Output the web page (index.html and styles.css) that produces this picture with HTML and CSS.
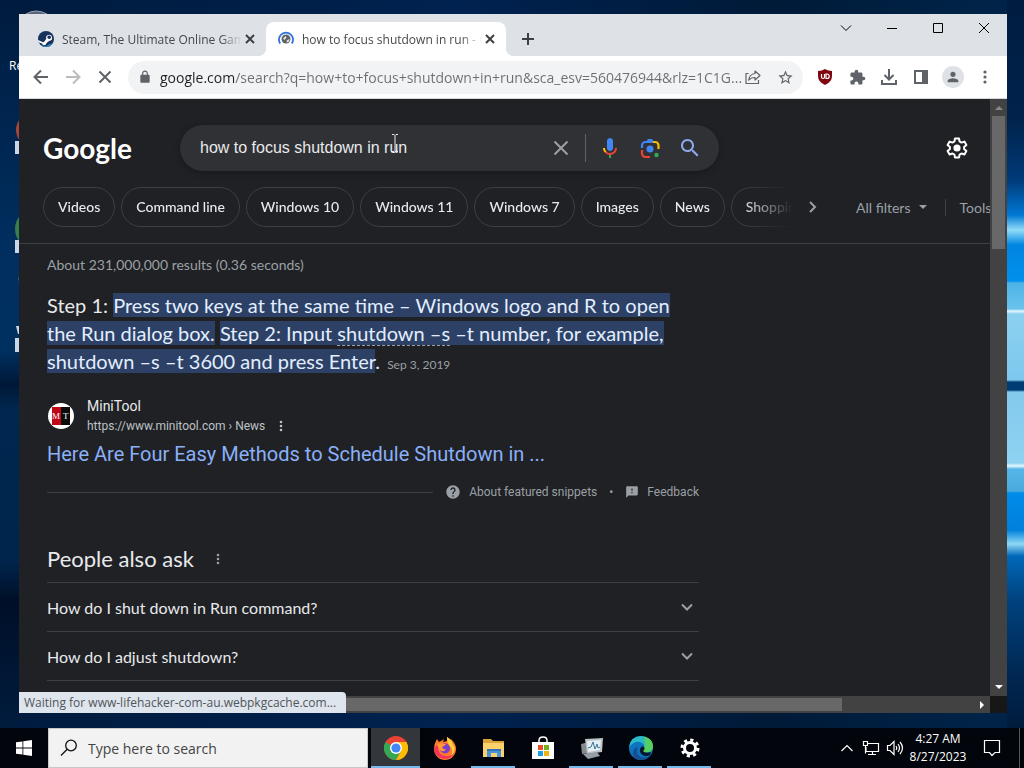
FILE: index.html
```html
<!DOCTYPE html>
<html lang="en">
<head>
    <meta charset="UTF-8">
    <meta name="viewport" content="width=device-width, initial-scale=1.0">
    <title>how to focus shutdown in run</title>
    <link rel="stylesheet" href="styles.css">
</head>
<body>
    <main class="desktop">
        <!-- desktop shortcuts, mostly hidden behind the window -->
        <svg class="shortcuts" width="48" height="400" viewBox="0 0 48 400" aria-hidden="true">
            <path d="M26 14q10-6 21 0" fill="#56657a" stroke="#9aa7b8" stroke-width="1"/>
            <circle cx="33" cy="130" r="17" fill="#a8453f"/>
            <circle cx="35" cy="229" r="20" fill="#35804f"/>
            <path d="M15 141h5v13h-5zM15 240h5v13h-5zM15 338h5v14h-5zM16 326h4v8h-2z" fill="#c9d6ea"/>
            <path d="M20 274q-3 4 0 10z" fill="#5c7a70"/>
        </svg>
        <span class="shortcut-label">Re</span>

        <section class="window">
            <header class="titlebar">
                <div class="tab">
                    <svg width="16" height="16" viewBox="0 0 16 16">
                        <circle cx="8" cy="8" r="8" fill="#16325c"/>
                        <path d="M0 9l5 2.200a2.500 2.500 0 0 1 1-.2L8.300 7.800A3 3 0 1 1 11.400 9.800L8.500 12a2.300 2.300 0 0 1-4.500.6L.6 11.200z" fill="#fff"/>
                        <circle cx="11.200" cy="6.300" r="1.800" fill="#16325c"/>
                        <path d="M3 14.200a8 8 0 0 0 12-2l-4 1-3 2z" fill="#2b83b5"/>
                    </svg>
                    <span class="tab-title">Steam, The Ultimate Online Game</span>
                    <button class="tab-close" aria-label="Close tab"><svg width="16" height="16" viewBox="0 0 16 16"><path d="M4 4l8 8M12 4l-8 8" stroke="#3c4043" stroke-width="2"/></svg></button>
                </div>
                <div class="tab active">
                    <svg width="16" height="16" viewBox="0 0 16 16">
                        <path d="M2.200 12.500A7 7 0 1 1 13.800 12.500" fill="none" stroke="#2f6fde" stroke-width="1.800"/>
                        <circle cx="8" cy="8" r="4.500" fill="#5f6368"/>
                        <path d="M5 7.500l2.500-2.500 1 1.500-2 2.500zM8.500 9.500l3-1.500-.5 2.500-2 1z" fill="#dfe3e8"/>
                    </svg>
                    <span class="tab-title">how to focus shutdown in run - G</span>
                    <button class="tab-close" aria-label="Close tab"><svg width="16" height="16" viewBox="0 0 16 16"><path d="M4 4l8 8M12 4l-8 8" stroke="#3c4043" stroke-width="2"/></svg></button>
                </div>
                <button class="new-tab" aria-label="New tab"><svg width="16" height="16" viewBox="0 0 16 16"><path d="M8 2v12M2 8h12" stroke="#3c4043" stroke-width="2"/></svg></button>
                <div class="window-controls">
                    <button aria-label="Search tabs"><svg width="12" height="12" viewBox="0 0 12 12"><path d="M1 3.500l5 5 5-5"/></svg></button>
                    <button aria-label="Minimize"><svg width="12" height="12" viewBox="0 0 12 12"><path d="M1 6.500h10"/></svg></button>
                    <button aria-label="Maximize"><svg width="12" height="12" viewBox="0 0 12 12"><path d="M1.500 1.500h9v9h-9z"/></svg></button>
                    <button aria-label="Close"><svg width="12" height="12" viewBox="0 0 12 12"><path d="M1 1l10 10M11 1L1 11"/></svg></button>
                </div>
            </header>

            <nav class="toolbar">
                <button aria-label="Back"><svg width="16" height="16" viewBox="0 0 16 16"><path d="M15 8H2M8 1.500L1.500 8 8 14.500" fill="none" stroke="#5f6368" stroke-width="2"/></svg></button>
                <button aria-label="Forward"><svg width="16" height="16" viewBox="0 0 16 16"><path d="M1 8h13M8 1.500L14.500 8 8 14.500" fill="none" stroke="#babcbe" stroke-width="2"/></svg></button>
                <button aria-label="Stop"><svg width="16" height="16" viewBox="0 0 16 16"><path d="M2.500 2.500l11 11M13.500 2.500l-11 11" stroke="#5f6368" stroke-width="2"/></svg></button>
                <div class="omnibox">
                    <svg width="14" height="14" viewBox="0 0 24 24"><path fill="#5f6368" d="M18 8h-1V6c0-2.760-2.240-5-5-5S7 3.240 7 6v2H6c-1.100 0-2 .9-2 2v10c0 1.100.9 2 2 2h12c1.100 0 2-.9 2-2V10c0-1.100-.9-2-2-2zM9 6c0-1.660 1.340-3 3-3s3 1.340 3 3v2H9z"/></svg>
                    <input type="text" class="url" aria-label="Address bar" value="google.com/search?q=how+to+focus+shutdown+in+run&amp;sca_esv=560476944&amp;rlz=1C1G...">
                    <button class="share" aria-label="Share"><svg width="16" height="16" viewBox="0 0 16 16"><path d="M3.500 4.500H1v10h12.500V11M10 2l5 4.500-5 4.500V8.500c-3 0-4.800.7-6.300 2.500.5-3.500 2.500-6 6.300-6.500z" fill="none" stroke="#5f6368" stroke-width="1.200" stroke-linejoin="round"/></svg></button>
                    <button aria-label="Bookmark"><svg width="17" height="17" viewBox="0 0 24 24"><path fill="#5f6368" d="M22 9.240l-7.190-.62L12 2 9.190 8.630 2 9.240l5.460 4.730L5.820 21 12 17.270 18.180 21l-1.630-7.030L22 9.240zM12 15.400l-3.760 2.270 1-4.280-3.320-2.880 4.380-.38L12 6.100l1.710 4.040 4.380.38-3.320 2.880 1 4.280L12 15.400z"/></svg></button>
                </div>
                <button aria-label="uBlock Origin"><svg width="16" height="16" viewBox="0 0 16 16"><path d="M8 0q3 2 7 2v5q0 6-7 9-7-3-7-9V2q4 0 7-2z" fill="#800610"/><path d="M4.500 5v3q0 1.500 1.500 1.500T7.500 8V5M9 5v4.500h1a2 2 0 0 0 0-4.500z" fill="none" stroke="#fff" stroke-width="1.200"/></svg></button>
                <button aria-label="Extensions"><svg width="17" height="17" viewBox="0 0 24 24"><path fill="#5f6368" d="M20.500 11H19V7c0-1.100-.9-2-2-2h-4V3.500C13 2.120 11.880 1 10.500 1S8 2.120 8 3.500V5H4c-1.100 0-1.990.9-1.990 2v3.800H3.500c1.490 0 2.700 1.210 2.700 2.700s-1.210 2.700-2.700 2.700H2V20c0 1.100.9 2 2 2h3.800v-1.500c0-1.490 1.210-2.700 2.700-2.700 1.490 0 2.700 1.210 2.700 2.700V22H17c1.100 0 2-.9 2-2v-4h1.500c1.380 0 2.500-1.120 2.500-2.500S21.880 11 20.500 11z"/></svg></button>
                <button aria-label="Downloads"><svg width="16" height="16" viewBox="0 0 16 16"><path d="M8 0v10M3.500 6L8 10.500 12.500 6M1 11v4h14v-4" fill="none" stroke="#5f6368" stroke-width="2"/></svg></button>
                <button aria-label="Side panel"><svg width="14" height="14" viewBox="0 0 14 14"><path d="M1 1h12v12H1z" fill="none" stroke="#5f6368" stroke-width="2"/><path d="M8 1h5v12H8z" fill="#5f6368"/></svg></button>
                <button aria-label="Profile"><span class="avatar"><svg width="16" height="16" viewBox="0 0 24 24"><path fill="#5f6368" d="M12 12c2.210 0 4-1.790 4-4s-1.790-4-4-4-4 1.790-4 4 1.790 4 4 4zm0 2c-2.670 0-8 1.340-8 4v2h16v-2c0-2.660-5.330-4-8-4z"/></svg></span></button>
                <button aria-label="Menu"><svg width="4" height="14" viewBox="0 0 4 14" fill="#5f6368"><circle cx="2" cy="2" r="1.600"/><circle cx="2" cy="7" r="1.600"/><circle cx="2" cy="12" r="1.600"/></svg></button>
            </nav>

            <div class="viewport">
                <div class="page">
                    <div class="search-row">
                        <a href="#" class="logo">Google</a>
                        <form class="search-box">
                            <input type="text" aria-label="Search" value="how to focus shutdown in run">
                            <button type="reset" aria-label="Clear"><svg width="16" height="16" viewBox="0 0 16 16"><path d="M1.500 1.500l13 13M14.500 1.500l-13 13" stroke="#9aa0a6" stroke-width="2"/></svg></button>
                            <span class="search-divider"></span>
                            <button type="button" aria-label="Search by voice"><svg width="24" height="24" viewBox="0 0 24 24"><path fill="#4285f4" d="M12 15c1.660 0 3-1.310 3-2.970V5.010C15 3.350 13.660 2 12 2S9 3.340 9 5.010v7.020C9 13.690 10.340 15 12 15z"/><path fill="#34a853" d="M11 18.080h2V22h-2z"/><path fill="#fbbc04" d="M7.050 16.870C5.780 15.540 5 14.040 5 12h2c0 1.450.56 2.420 1.470 3.380v.32l-1.150 1.180z"/><path fill="#ea4335" d="M12 16.930a4.970 5.250 0 0 1-3.540-1.550l-1.410 1.490C8.310 18.210 10.070 19 12 19c3.870 0 6.990-2.920 6.990-7H17c0 2.920-2.240 4.930-5 4.930z"/></svg></button>
                            <button type="button" aria-label="Search by image"><svg width="24" height="24" viewBox="0 0 24 24" fill="none" stroke-width="2.200"><path stroke="#4285f4" d="M4 12V9.500A3.500 3.500 0 0 1 7.500 6H15"/><path d="M8 6l2-3h4l2 3z" fill="#4285f4"/><path stroke="#fbbc04" d="M15 6h2a3.500 3.500 0 0 1 3.500 3.500V13"/><path stroke="#ea4335" d="M4 14v3.500A3.500 3.500 0 0 0 7.500 21H12"/><circle cx="12" cy="13" r="3.500" fill="#4285f4"/><circle cx="18.500" cy="19" r="2.200" fill="#34a853"/></svg></button>
                            <button type="submit" aria-label="Google Search"><svg width="24" height="24" viewBox="0 0 24 24"><path fill="#8ea9f0" d="M15.500 14h-.79l-.28-.27C15.410 12.590 16 11.110 16 9.500 16 5.910 13.090 3 9.500 3S3 5.910 3 9.500 5.910 16 9.500 16c1.610 0 3.090-.59 4.230-1.570l.27.28v.79l5 4.990L20.490 19l-4.990-5zm-6 0C7.010 14 5 11.990 5 9.500S7.010 5 9.500 5 14 7.010 14 9.500 11.990 14 9.500 14z"/></svg></button>
                        </form>
                        <button class="settings" aria-label="Settings"><svg width="24" height="24" viewBox="0 0 24 24" fill="none"><path stroke="#fff" stroke-width="2" stroke-linejoin="round" d="M10 2.500h4l.6 3 1.900 1.100 2.900-1 2 3.500-2.300 1.900v2.100l2.300 1.900-2 3.500-2.900-1-1.900 1.100-.6 2.900h-4l-.6-2.900-1.900-1.100-2.900 1-2-3.500 2.300-1.900v-2.100L2.600 9.100l2-3.500 2.900 1 1.900-1.100z"/><circle cx="12" cy="12" r="3.600" fill="#fff"/></svg></button>
                    </div>

                    <div class="filter-row">
                        <div class="chips">
                            <a href="#">Videos</a>
                            <a href="#">Command line</a>
                            <a href="#">Windows 10</a>
                            <a href="#">Windows 11</a>
                            <a href="#">Windows 7</a>
                            <a href="#">Images</a>
                            <a href="#">News</a>
                            <a href="#">Shopping</a>
                        </div>
                        <button class="next" aria-label="More filters"><svg width="10" height="14" viewBox="0 0 10 14"><path d="M2 2l5 5-5 5" fill="none" stroke="#9aa0a6" stroke-width="2"/></svg></button>
                        <button class="all-filters">All filters <svg width="8" height="4" viewBox="0 0 8 4"><path d="M0 0h8L4 4z" fill="#9aa0a6"/></svg></button>
                        <button class="tools">Tools</button>
                    </div>

                    <div class="results">
                        <p class="stats">About 231,000,000 results (0.36 seconds)</p>
                        <p class="snippet">Step 1: <mark>Press two keys at the same time – Windows logo and R to open<br>the Run dialog box.</mark> <mark>Step 2: Input <span class="term">shutdown –s</span> –t number, for example,<br>shutdown –s –t 3600 and press Enter</mark>. <time>Sep 3, 2019</time></p>

                        <div class="source">
                            <svg width="28" height="28" viewBox="0 0 28 28">
                                <circle cx="14" cy="14" r="13" fill="#fff"/>
                                <path d="M5 5h9v18H5z" fill="#c00818"/>
                                <path d="M14 5h9v18h-9z" fill="#0b0b0b"/>
                                <text x="5" y="17" font-family="Liberation Serif, serif" font-size="9" fill="#fff">M</text>
                                <text x="16" y="17" font-family="Liberation Serif, serif" font-size="9" fill="#fff">T</text>
                            </svg>
                            <div>
                                <div class="site">MiniTool</div>
                                <div class="path">https://www.minitool.com › News
                                    <button class="dots" aria-label="About this result"><svg width="4" height="12" viewBox="0 0 4 12" fill="#bdc1c6"><circle cx="2" cy="2" r="1.300"/><circle cx="2" cy="6" r="1.300"/><circle cx="2" cy="10" r="1.300"/></svg></button>
                                </div>
                            </div>
                        </div>
                        <h3><a href="#">Here Are Four Easy Methods to Schedule Shutdown in ...</a></h3>

                        <div class="snippet-footer">
                            <a href="#"><svg width="16" height="16" viewBox="0 0 24 24"><path fill="#9aa0a6" d="M12 2C6.480 2 2 6.480 2 12s4.480 10 10 10 10-4.480 10-10S17.520 2 12 2zm1 17h-2v-2h2v2zm2.070-7.750l-.9.920C13.450 12.900 13 13.500 13 15h-2v-.5c0-1.100.45-2.100 1.170-2.830l1.240-1.260c.37-.36.59-.86.59-1.410 0-1.100-.9-2-2-2s-2 .9-2 2H8c0-2.210 1.790-4 4-4s4 1.790 4 4c0 .88-.36 1.680-.93 2.250z"/></svg>About featured snippets</a>
                            <span>•</span>
                            <a href="#"><svg width="14" height="14" viewBox="0 0 24 24"><path fill="#9aa0a6" d="M20 2H4c-1.100 0-1.990.9-1.990 2L2 22l4-4h14c1.100 0 2-.9 2-2V4c0-1.100-.9-2-2-2zm-7 12h-2v-2h2v2zm0-4h-2V6h2v4z"/></svg>Feedback</a>
                        </div>

                        <div class="ask-title">
                            <h2>People also ask</h2>
                            <button class="dots" aria-label="About this section"><svg width="4" height="12" viewBox="0 0 4 12" fill="#9aa0a6"><circle cx="2" cy="2" r="1.300"/><circle cx="2" cy="6" r="1.300"/><circle cx="2" cy="10" r="1.300"/></svg></button>
                        </div>
                        <button class="question">How do I shut down in Run command? <svg width="14" height="9" viewBox="0 0 14 9"><path d="M2 1.500l5 5 5-5" fill="none" stroke="#9aa0a6" stroke-width="2"/></svg></button>
                        <button class="question">How do I adjust shutdown? <svg width="14" height="9" viewBox="0 0 14 9"><path d="M2 1.500l5 5 5-5" fill="none" stroke="#9aa0a6" stroke-width="2"/></svg></button>
                        <hr>
                    </div>
                </div>
                <div class="scroll-v">
                    <svg width="8" height="4" viewBox="0 0 8 4"><path d="M0 4l4-4 4 4z" fill="#888"/></svg>
                    <div class="thumb"></div>
                    <svg width="8" height="4" viewBox="0 0 8 4"><path d="M0 0h8L4 4z" fill="#fff"/></svg>
                </div>
                <div class="scroll-h">
                    <div class="thumb"></div>
                    <svg width="4" height="8" viewBox="0 0 4 8"><path d="M0 0l4 4-4 4z" fill="#fff"/></svg>
                </div>
                <div class="corner"></div>
            </div>
            <div class="status">Waiting for www-lifehacker-com-au.webpkgcache.com...</div>
        </section>

        <svg class="cursor" width="8" height="18" viewBox="0 0 8 18" fill="none" stroke="#e8eaed"><path d="M1 .5h2l1 1 1-1h2M4 1.500v15M1 17.500h2l1-1 1 1h2"/></svg>
    </main>

    <footer class="taskbar">
        <button class="start" aria-label="Start"><svg width="16" height="16" viewBox="0 0 16 16" fill="#fff"><path d="M0 2.300l6.500-.9v6.200H0zM7.300 1.300L16 0v7.600H7.300zM0 8.400h6.500v6.200L0 13.700zM7.300 8.400H16V16l-8.700-1.300z"/></svg></button>
        <div class="task-search">
            <svg width="18" height="18" viewBox="0 0 18 18" fill="none" stroke="#111" stroke-width="1.300"><circle cx="11" cy="6.500" r="5.300"/><path d="M7.200 10.300L1 16.500"/></svg>
            <input type="text" aria-label="Search Windows" placeholder="Type here to search">
        </div>
        <div class="apps">
            <button class="app open current" aria-label="Google Chrome"><svg width="24" height="24" viewBox="0 0 24 24"><circle cx="12" cy="12" r="12" fill="#ea4335"/><path d="M12 12L1.600 6A12 12 0 0 0 12 24l5-9z" fill="#34a853"/><path d="M12 24A12 12 0 0 0 22.400 6H12l5 9z" fill="#fbbc04"/><circle cx="12" cy="12" r="6" fill="#fff"/><circle cx="12" cy="12" r="4.600" fill="#4285f4"/></svg></button>
            <button class="app" aria-label="Firefox"><svg width="24" height="24" viewBox="0 0 24 24"><path d="M2.500 6L4 3l2 3 2-1 3-2-1 3 4-1V1q2 1 3 3l1-1q5 5 5 10a11 11 0 0 1-22 0q0-4 1.500-7z" fill="#ff7a2b"/><path d="M14 1q6 3 6 10l1-3q2 8-3 12 3-6-1-10-3-3-3-9z" fill="#ffd43b"/><path d="M1 12a11 11 0 0 0 20 6q-6 4-12 1-5-3-3-9-4-1-5 2z" fill="#f5325b"/><circle cx="12" cy="12.500" r="5" fill="#7a3fd0"/><path d="M5 8q3-2 5 0h3q-1 2-4 3 1 3 4 2-2 4-6 1-3-3-2-6z" fill="#ff9a2e"/></svg></button>
            <button class="app open" aria-label="File Explorer"><svg width="24" height="24" viewBox="0 0 24 24"><path d="M1 3h8l2 2h11v16H1z" fill="#dca339"/><path d="M1 7h21v14H1z" fill="#fad16a"/><path d="M5 13h14v8h-4v-4H9v4H5z" fill="#4795d6"/><path d="M5 13h14v2H5z" fill="#2f74b5"/></svg></button>
            <button class="app" aria-label="Microsoft Store"><svg width="24" height="24" viewBox="0 0 24 24"><path d="M8 7V4.500Q8 1 12 1t4 3.500V7" fill="none" stroke="#fff" stroke-width="1.500"/><path d="M1 6h22v17H1z" fill="#fff"/><path d="M7 9h5v5H7z" fill="#e8502a"/><path d="M13 9h5v5h-5z" fill="#77b01a"/><path d="M7 15h5v5H7z" fill="#20a0dc"/><path d="M13 15h5v5h-5z" fill="#f5b40c"/></svg></button>
            <button class="app open" aria-label="Task Manager"><svg width="24" height="24" viewBox="0 0 24 24"><path d="M1 8l8-2 1 11-8 1z" fill="#858b90"/><path d="M5 3l18-1-1 14-15 2z" fill="#b9c2c7"/><path d="M7 5l14-1-1 10-12 2z" fill="#e5edf0"/><path d="M8 12l3-1 2-5 2 7 2-5 1 4 2-1" fill="none" stroke="#38799b"/><path d="M3 18l14-2 3 4-12 3z" fill="#959da2"/></svg></button>
            <button class="app open" aria-label="Microsoft Edge"><svg width="24" height="24" viewBox="0 0 24 24"><circle cx="12" cy="12" r="12" fill="#0d75bd"/><path d="M0 11Q2 0 12 0q11 1 12 10 0 6-7 6-4 0-3-2 3-4-1-7Q7 3 0 11z" fill="#2bb9c6"/><path d="M15 .4q9 2 9 10 0 6-7 6-4 0-3-2 4-4 1-14z" fill="#56cf61"/><path d="M9 11q-3 7 3 10 5 2 10-3-4 7-12 6-7-2-6-8 1-5 5-5z" fill="#174f91"/><path d="M14 10q3 3 0 5 2 3 8 1l-1 3q-7 3-10-3-1-4 3-6z" fill="#06172b"/></svg></button>
            <button class="app open" aria-label="Settings"><svg width="20" height="20" viewBox="0 0 20 20"><circle cx="10" cy="10" r="5.500" fill="none" stroke="#fff" stroke-width="3"/><circle cx="10" cy="10" r="8" fill="none" stroke="#fff" stroke-width="3" stroke-dasharray="3.140 3.140"/></svg></button>
        </div>
        <div class="tray">
            <button aria-label="Show hidden icons"><svg width="14" height="8" viewBox="0 0 14 8"><path d="M1.500 7L7 1.500 12.500 7"/></svg></button>
            <button aria-label="Network"><svg width="18" height="16" viewBox="0 0 18 16"><path d="M5 3.500h11.500v8H4V7M10.500 11.500v3M6 14.500h8M1.500 1.500h4v4h-4zM3.500 5.500v8"/></svg></button>
            <button aria-label="Volume"><svg width="18" height="16" viewBox="0 0 18 16"><path d="M1.500 5.500H4l4-4v13l-4-4H1.500zM10 6q1.500 2 0 4M12 4q3 4 0 8M14 2q5 6 0 12"/></svg></button>
            <div class="clock">4:27 AM<br>8/27/2023</div>
            <button class="notify" aria-label="Notifications"><svg width="18" height="18" viewBox="0 0 18 18"><path d="M1.500 1.500h15v12H12L9 16.500 6.500 13.500h-5z"/></svg></button>
        </div>
    </footer>
</body>
</html>
```
FILE: styles.css
```css
* {
    box-sizing: border-box;
}

body {
    margin: 0;
    height: 100vh;
    display: flex;
    flex-direction: column;
    overflow: hidden;
    font-family: "Open Sans", "Noto Sans", sans-serif;
    font-size: 12px;
}

button {
    display: flex;
    align-items: center;
    justify-content: center;
    padding: 0;
    border: none;
    background: none;
    font: inherit;
    color: inherit;
}

input {
    min-width: 0;
    padding: 0;
    border: none;
    outline: none;
    background: none;
    font: inherit;
}

a {
    color: inherit;
    text-decoration: none;
}

svg {
    flex: none;
}

/* Desktop */
.desktop {
    position: relative;
    flex: 1;
    background:
        linear-gradient(#001c40 0, #00234c 120px, #003a78 180px, #0078d4 215px, #8fdcf8 230px, #0085e0 245px, #0090ec 281px, #4db4e6 283px, #69c3ec 309px, #e3f8ff 311px, #8cd0f0 314px, #7cc8ee 380px, #003c74 382px, #003c74 390px, #82c9ec 392px, #8fd2f2 463px, #e3f8ff 466px, #55b5e6 469px, #4aaade 491px, #008cea 493px, #0080dc 530px, #8fd8f5 544px, #0068b8 556px, #00427e 600px, #00264f 680px, #001c3c 728px) right / 17px 100% no-repeat,
        linear-gradient(#001b3d 0, #00234c 90px, #002f60 260px, #003060 350px, #001838 385px, #00274f 410px, #00254d 560px, #000f28 600px, #001c3e 728px) left / 19px 100% no-repeat,
        linear-gradient(90deg, #001b3d, #002250 45%, #001a38 75%, #00254a);
}

.shortcuts {
    position: absolute;
    left: 0;
    top: 0;
}

.shortcut-label {
    position: absolute;
    left: 9px;
    top: 57px;
    color: #fff;
}

.window {
    position: absolute;
    top: 14px;
    right: 17px;
    bottom: 15px;
    left: 19px;
    display: flex;
    flex-direction: column;
    background: #202124;
}

.titlebar {
    display: flex;
    align-items: flex-end;
    height: 42px;
    padding-left: 7px;
    background: #dee1e6;
}

.tab {
    display: flex;
    align-items: center;
    width: 240px;
    height: 34px;
    padding: 0 8px 0 12px;
    color: #45494d;
}

.tab.active {
    position: relative;
    background: #fff;
    border-radius: 8px 8px 0 0;
}

.tab.active::before,
.tab.active::after {
    content: "";
    position: absolute;
    bottom: 0;
    width: 8px;
    height: 8px;
}

.tab.active::before {
    left: -8px;
    background: radial-gradient(circle at 0 0, transparent 8px, #fff 8px);
}

.tab.active::after {
    right: -8px;
    background: radial-gradient(circle at 100% 0, transparent 8px, #fff 8px);
}

.tab-title {
    flex: 1;
    margin: 0 0 0 8px;
    overflow: hidden;
    white-space: nowrap;
    mask-image: linear-gradient(90deg, #000 88%, transparent);
}

.new-tab {
    width: 28px;
    height: 34px;
    margin-left: 8px;
}

.window-controls {
    display: flex;
    align-self: flex-start;
    margin-left: auto;
}

.window-controls button {
    width: 46px;
    height: 28px;
}

.window-controls svg {
    fill: none;
    stroke: #000;
}

.toolbar {
    display: flex;
    align-items: center;
    height: 43px;
    padding: 0 6px;
    background: #fff;
    border-bottom: 1px solid #d5d8dc;
}

.toolbar button {
    flex: none;
    width: 32px;
    height: 32px;
}

.omnibox {
    flex: 1;
    display: flex;
    align-items: center;
    min-width: 0;
    height: 33px;
    margin: 0 6px 0 7px;
    padding: 0 2px 0 10px;
    border-radius: 17px;
    background: #f1f3f4;
    font-size: 14px;
}

.url {
    flex: 1;
    margin-left: 8px;
    /* the host is darker than the rest of the address */
    background: linear-gradient(90deg, #202124 75px, #6b6f74 75px);
    background-clip: text;
    color: transparent;
}

.toolbar .share {
    width: 24px;
    justify-content: flex-start;
}

.avatar {
    display: flex;
    align-items: center;
    justify-content: center;
    width: 22px;
    height: 22px;
    border-radius: 50%;
    background: #dee1e6;
}

/* Page area with its scrollbars */
.viewport {
    flex: 1;
    min-height: 0;
    display: grid;
    grid-template-columns: minmax(0, 1fr) 17px;
    grid-template-rows: minmax(0, 1fr) 17px;
}

.page {
    overflow: hidden;
    background: #202124;
    color: #e8eaed;
    font-family: "Lato", "Open Sans", sans-serif;
}

.scroll-v {
    display: flex;
    flex-direction: column;
    align-items: center;
    padding: 7px 0;
    background: #424242;
}

.scroll-v .thumb {
    width: 13px;
    height: 133px;
    margin: 6px 0 auto;
    background: #686868;
}

.scroll-h {
    display: flex;
    align-items: center;
    padding: 0 6px 0 17px;
    background: #424242;
}

.scroll-h .thumb {
    width: 85%;
    height: 13px;
    margin-right: auto;
    background: #686868;
}

.corner {
    background: #171717;
}

.status {
    position: absolute;
    left: 0;
    bottom: 0;
    width: 327px;
    height: 21px;
    padding-left: 5px;
    border-top-right-radius: 4px;
    background: #dee5ec;
    color: #50555a;
    line-height: 21px;
    white-space: nowrap;
}

/* Search header */
.search-row {
    display: flex;
    align-items: center;
    padding: 26px 21px 0 24px;
}

.logo {
    width: 137px;
    color: #fff;
    font-size: 28px;
    font-weight: 700;
}

.search-box {
    display: flex;
    align-items: center;
    width: 539px;
    height: 46px;
    padding: 0 9px 0 20px;
    border-radius: 23px;
    background: #303134;
    box-shadow: 0 2px 6px rgba(0, 0, 0, 0.25);
}

.search-box input {
    flex: 1;
    color: #e8eaed;
    font-family: "Liberation Sans", Arial, sans-serif;
    font-size: 16px;
}

.search-box button {
    width: 40px;
    height: 44px;
}

.search-divider {
    width: 1px;
    height: 28px;
    margin: 0 4px;
    background: #5f6368;
}

.settings {
    width: 24px;
    height: 40px;
    margin-left: auto;
}

.filter-row {
    display: flex;
    align-items: center;
    padding: 16px 0 16px 24px;
    border-bottom: 1px solid #3c4043;
    font-size: 14px;
    white-space: nowrap;
}

.chips {
    flex: none;
    display: flex;
    gap: 6px;
    width: 750px;
    overflow: hidden;
    mask-image: linear-gradient(90deg, #000 93%, transparent);
}

.chips a {
    flex: none;
    height: 40px;
    padding: 0 14px;
    border: 1px solid #3c4043;
    border-radius: 20px;
    line-height: 38px;
    font-weight: 500;
}

.next {
    flex: none;
    width: 40px;
    height: 40px;
}

.all-filters {
    flex: none;
    gap: 9px;
    margin-left: 23px;
    padding-right: 18px;
    border-right: 1px solid #3c4043;
    color: #9aa0a6;
}

.tools {
    flex: none;
    margin-left: 13px;
    color: #9aa0a6;
}

/* Results */
.results {
    width: 652px;
    margin-left: 28px;
}

.stats {
    margin: 11px 0 16px;
    color: #9aa0a6;
    font-size: 14px;
    line-height: 20px;
}

.snippet {
    margin: 0;
    font-size: 20px;
    line-height: 28px;
    white-space: nowrap;
}

.snippet mark {
    background: #2d4166;
    color: #e2eeff;
}

.term {
    border-bottom: 1px dashed #9aa0a6;
}

.snippet time {
    margin-left: 2px;
    color: #9aa0a6;
    font-size: 12px;
}

.source {
    display: flex;
    align-items: center;
    gap: 12px;
    margin-top: 17px;
    font-family: "Roboto", sans-serif;
}

.site {
    font-size: 14px;
    line-height: 20px;
}

.path {
    display: flex;
    align-items: center;
    gap: 14px;
    color: #bdc1c6;
    line-height: 20px;
}

h3 {
    margin: 5px 0 0;
    color: #8ab0f8;
    font-family: "Roboto", sans-serif;
    font-size: 20px;
    font-weight: 400;
    line-height: 26px;
}

.snippet-footer {
    display: flex;
    align-items: center;
    gap: 12px;
    margin-top: 15px;
    color: #9aa0a6;
    font-family: "Roboto", sans-serif;
    line-height: 20px;
}

.snippet-footer::before {
    content: "";
    flex: 1;
    height: 1px;
    background: #3c4043;
}

.snippet-footer a {
    display: flex;
    align-items: center;
    gap: 8px;
}

.ask-title {
    display: flex;
    align-items: center;
    gap: 22px;
    margin-top: 43px;
    padding-bottom: 9px;
}

h2 {
    margin: 0;
    font-size: 22px;
    font-weight: 400;
    line-height: 28px;
}

.question {
    width: 100%;
    height: 49px;
    padding-right: 5px;
    justify-content: space-between;
    border-top: 1px solid #3c4043;
    font-size: 16px;
}

hr {
    margin: 0;
    border: none;
    border-top: 1px solid #3c4043;
}

.cursor {
    position: absolute;
    left: 391px;
    top: 134px;
}

/* Taskbar */
.taskbar {
    display: flex;
    height: 40px;
    background: #02050b;
    color: #fff;
}

.start {
    width: 48px;
}

.task-search {
    display: flex;
    align-items: center;
    gap: 10px;
    width: 320px;
    padding-left: 11px;
    background: #f2f2f2;
    border: 1px solid #c8c8c8;
}

.task-search input {
    flex: 1;
    font-size: 14px;
}

.task-search input::placeholder {
    color: #444;
}

.apps {
    display: flex;
    margin-left: 3px;
}

.app {
    width: 49px;
    padding-top: 2px;
    border-bottom: 2px solid transparent;
    background-clip: padding-box;
}

.app.open {
    border-image: linear-gradient(90deg, transparent 4px, #76b9ed 4px, #76b9ed 44px, transparent 44px) 2;
}

.app.current {
    background: #33373c;
    border-image: none;
    border-color: #76b9ed;
}

.tray {
    display: flex;
    align-items: center;
    margin-left: auto;
    margin-right: 4px;
    border-right: 1px solid #555;
}

.tray button {
    width: 24px;
    height: 40px;
}

.tray svg {
    fill: none;
    stroke: #fff;
    stroke-width: 1.2;
}

.clock {
    width: 62px;
    text-align: center;
    line-height: 18px;
}

.tray .notify {
    width: 46px;
    margin-right: 4px;
}
```
